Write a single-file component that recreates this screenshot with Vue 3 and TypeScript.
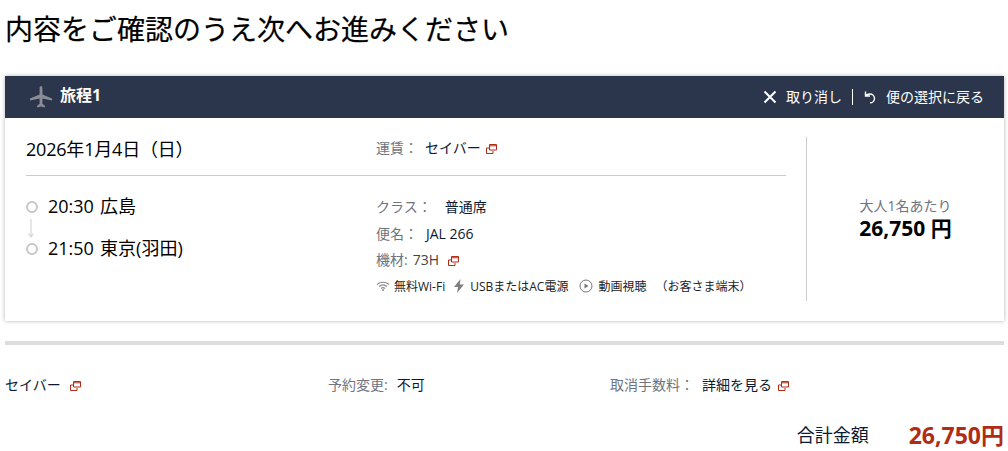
<template>
  <div class="page">
    <h1 class="title">内容をご確認のうえ次へお進みください</h1>

    <section class="card">
      <header class="card-head">
        <div class="head-left">
          <svg class="plane" viewBox="0 0 24 24" width="24" height="24">
            <path d="M12 1c.9 0 1.400 1 1.400 2.200v6.300l9.600 4.100v1.900l-9.600-1.900v5.200l2.500 2v1.700L12 21.500l-3.900 1v-1.700l2.500-2v-5.200L1 15.500v-1.900l9.600-4.100V3.200C10.600 2 11.100 1 12 1z" fill="#8a8d94" />
          </svg>
          <span class="trip">旅程1</span>
        </div>
        <div class="head-right">
          <a class="head-link">
            <svg viewBox="0 0 14 14" width="14" height="14">
              <path d="M1.500 1.500l11 11M12.500 1.500l-11 11" stroke="#fff" stroke-width="2" fill="none" />
            </svg>
            <span class="head-text">取り消し</span>
          </a>
          <span class="head-sep"></span>
          <a class="head-link">
            <svg viewBox="0 0 14 14" width="14" height="14">
              <path d="M2.500 1.500v4.500h4.500M2.700 5.800C3.800 4.500 5.200 4 6.800 4c2.700 0 4.700 2 4.700 4.400s-2 4.400-4.500 4.400" stroke="#fff" stroke-width="1.400" fill="none" />
            </svg>
            <span class="head-text">便の選択に戻る</span>
          </a>
        </div>
      </header>

      <div class="card-body">
        <div class="main">
          <div class="row-top">
            <div class="date">2026年1月4日（日）</div>
            <div class="fare">
              <span class="lbl">運賃：</span>
              <span class="val">セイバー</span>
              <svg class="ext" viewBox="0 0 11 10" width="11" height="10"><use href="#ext" /></svg>
            </div>
          </div>
          <div class="row-bottom">
            <div class="route">
              <div class="stop">
                <span class="dot"></span>
                <span>20:30 広島</span>
              </div>
              <svg class="arrow" viewBox="0 0 8 20" width="8" height="20">
                <path d="M4 0v17M1.500 14.500L4 18l2.500-3.500" stroke="#d6d6d9" stroke-width="1.200" fill="none" />
              </svg>
              <div class="stop">
                <span class="dot"></span>
                <span>21:50 東京(羽田)</span>
              </div>
            </div>
            <div class="info">
              <div class="info-row"><span class="lbl">クラス：</span><span class="val class-val">普通席</span></div>
              <div class="info-row"><span class="lbl">便名：</span><span class="val flight-val">JAL 266</span></div>
              <div class="info-row">
                <span class="lbl">機材:</span><span class="val-grey">73H</span>
                <svg class="ext ext-plane" viewBox="0 0 11 10" width="11" height="10"><use href="#ext" /></svg>
              </div>
              <div class="amen">
                <svg viewBox="0 0 14 10" width="14" height="10">
                  <path d="M1 3.500C4.500 .5 9.500 .5 13 3.500M3 5.500c2.400-2 5.600-2 8 0M5 7.500c1.200-1 2.800-1 4 0" stroke="#8a8a8a" stroke-width="1.100" fill="none" />
                  <circle cx="7" cy="9" r="1" fill="#8a8a8a" />
                </svg>
                <span class="amen-text wifi-text">無料Wi-Fi</span>
                <svg class="bolt" viewBox="0 0 10 14" width="10" height="14">
                  <path d="M6.500 0L0 8h4l-1 6 7-8.500H5.800z" fill="#7f7f7f" />
                </svg>
                <span class="amen-text">USBまたはAC電源</span>
                <svg class="play" viewBox="0 0 14 14" width="14" height="14">
                  <circle cx="7" cy="7" r="6" stroke="#777" fill="none" />
                  <path d="M5.500 4.500l4 2.500-4 2.500z" fill="#777" />
                </svg>
                <span class="amen-text">動画視聴</span>
                <span class="amen-text terminal">（お客さま端末）</span>
              </div>
            </div>
          </div>
        </div>
        <aside class="price">
          <div class="per">大人1名あたり</div>
          <div class="amount">26,750 円</div>
        </aside>
      </div>
    </section>

    <hr class="rule" />

    <div class="summary">
      <div class="sum-a">
        <span class="val">セイバー</span>
        <svg class="ext ext-a" viewBox="0 0 11 10" width="11" height="10"><use href="#ext" /></svg>
      </div>
      <div class="sum-b"><span class="lbl">予約変更:</span><span class="val">不可</span></div>
      <div class="sum-c">
        <span class="lbl">取消手数料：</span><span class="val">詳細を見る</span>
        <svg class="ext ext-c" viewBox="0 0 11 10" width="11" height="10"><use href="#ext" /></svg>
      </div>
    </div>

    <div class="total">
      <span class="total-label">合計金額</span>
      <span class="total-num">26,750円</span>
    </div>

    <svg width="0" height="0" class="defs">
      <symbol id="ext" viewBox="0 0 11 10">
        <path d="M3.500 .5h7v5.500h-7zM3.500 1.800h7M.5 4h2.500M.5 4v5.500h6.500V7" stroke="#b02c16" fill="none" />
      </symbol>
    </svg>
  </div>
</template>

<script setup lang="ts">
</script>

<style>
html,
body {
  margin: 0;
  background: #fff;
}
</style>

<style scoped>
.page {
  width: 1008px;
  height: 451px;
  box-sizing: border-box;
  padding: 0 4px 0 5px;
  font-family: "Open Sans", "Noto Sans CJK JP", sans-serif;
  color: #0b1a33;
  font-size: 14px;
}

.title {
  margin: 0;
  padding-top: 10px;
  height: 76px;
  box-sizing: border-box;
  font-size: 28px;
  line-height: 38px;
  font-weight: 400;
  color: #000;
  -webkit-text-stroke: 0.2px #000;
}

.card {
  height: 245px;
  background: #fff;
  box-shadow: 0 0 4px rgba(0, 0, 0, 0.3);
}

.card-head {
  height: 42px;
  background: #2b364d;
  color: #fff;
  display: flex;
  align-items: center;
  justify-content: space-between;
  padding: 0 20px 0 24px;
}

.head-left {
  display: flex;
  align-items: center;
  gap: 7px;
}

.trip {
  font-size: 16px;
  font-weight: 700;
  margin-top: -6px;
}

.head-right {
  display: flex;
  align-items: center;
  font-size: 14px;
}

.head-link {
  display: flex;
  align-items: center;
  gap: 9px;
}

.head-text {
  margin-top: -2px;
}

.head-sep {
  width: 1px;
  height: 16px;
  background: #fff;
  margin: 0 10px;
}

.card-body {
  display: flex;
  padding: 19px 0 20px 21px;
  height: 203px;
  box-sizing: border-box;
}

.main {
  width: 760px;
}

.row-top {
  display: flex;
  height: 38px;
  border-bottom: 1px solid #ccc;
  line-height: 24px;
}

.date {
  width: 350px;
  font-size: 18px;
  letter-spacing: -0.2px;
  color: #000;
}

.fare {
  margin-top: -1px;
}

.lbl {
  color: #6f7480;
}

.fare .lbl {
  margin-right: 7px;
}

.ext {
  margin-left: 5px;
  vertical-align: -1px;
}

.ext-plane {
  margin-left: 9px;
}

.ext-c {
  margin-left: 6px;
}

.row-bottom {
  display: flex;
}

.route {
  width: 350px;
  padding-top: 17px;
  font-size: 18px;
  word-spacing: 1.500px;
  color: #000;
}

.stop {
  display: flex;
  align-items: center;
  gap: 10px;
  height: 24px;
}

.dot {
  width: 12px;
  height: 12px;
  box-sizing: border-box;
  border: 2px solid #c9c6cb;
  border-radius: 50%;
  margin-top: 4px;
}

.arrow {
  display: block;
  margin: 2px 0 -4px 1px;
}

.info {
  padding-top: 18px;
}

.info-row {
  height: 26.500px;
  line-height: 26px;
}

.class-val {
  margin-left: 13px;
}

.flight-val {
  margin-left: 8px;
}

.val-grey {
  color: #444;
  margin-left: 5px;
}

.amen {
  display: flex;
  align-items: center;
  font-size: 12px;
  height: 25px;
  color: #222;
}

.amen-text {
  margin-left: 5px;
}

.wifi-text {
  margin-left: 4px;
}

.bolt {
  margin-left: 9px;
}

.bolt + .amen-text {
  margin-left: 6px;
}

.play {
  margin-left: 11px;
}

.terminal {
  margin-left: 9px;
}

.price {
  flex: 1;
  margin-left: 20px;
  border-left: 1px solid #ccc;
  display: flex;
  flex-direction: column;
  align-items: center;
  justify-content: center;
}

.per {
  color: #6f7480;
  line-height: 18px;
}

.amount {
  font-size: 21px;
  font-weight: 700;
  color: #000;
  line-height: 26px;
}

.rule {
  margin: 20px 0 0;
  border: 0;
  height: 4px;
  background: #ddd;
}

.summary {
  display: flex;
  height: 72px;
  padding-top: 28px;
  box-sizing: border-box;
  line-height: 24px;
}

.sum-a {
  width: 323px;
}

.ext-a {
  margin-left: 9px;
}

.sum-b {
  width: 282px;
}

.sum-b .lbl {
  margin-right: 9px;
}

.sum-c .lbl {
  margin-right: 8px;
}

.total {
  display: flex;
  justify-content: flex-end;
  align-items: center;
  margin-top: 5px;
  height: 26px;
  line-height: 26px;
}

.total-label {
  font-size: 18px;
  margin-right: 40px;
}

.total-num {
  font-size: 23px;
  font-weight: 700;
  color: #b02c16;
}

.defs {
  position: absolute;
}
</style>
